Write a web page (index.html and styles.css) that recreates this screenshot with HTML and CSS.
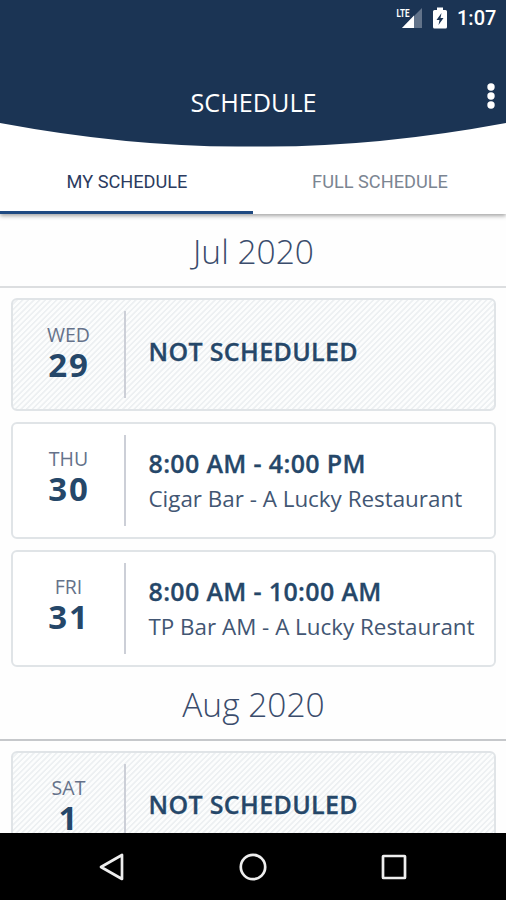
FILE: index.html
```html
<!DOCTYPE html>
<html lang="en">
<head>
<meta charset="utf-8">
<title>Schedule</title>
<link rel="stylesheet" href="styles.css">
</head>
<body>
<div class="app">
  <header class="header">
    <svg class="header-bg" viewBox="0 0 506 147" aria-hidden="true"><path d="M0 0H506V123Q379.500 146.500 268 146.500H238Q126.500 146.500 0 123Z" fill="#1b3454"/></svg>
    <div class="status">
      <svg class="signal" viewBox="0 0 27 22" aria-hidden="true"><path d="M26 1V21H6Z" fill="#62738a"/><path d="M18 8.500V21H6Z" fill="#fff"/><text class="lte" x="0.500" y="9.500" textLength="13" lengthAdjust="spacingAndGlyphs">LTE</text></svg>
      <svg class="battery" viewBox="0 0 14 22" aria-hidden="true"><path d="M4 0.500H10V3H12.500Q14 3 14 4.500V20Q14 21.500 12.500 21.500H1.500Q0 21.500 0 20V4.500Q0 3 1.500 3H4Z" fill="#fff"/><path d="M8.500 6L3.500 13H6.500L5.500 18L10.500 11H7.500Z" fill="#1b3454"/></svg>
      <span class="clock">1:07</span>
    </div>
    <div class="titlebar">
      <h1 class="title">SCHEDULE</h1>
      <svg class="more" viewBox="0 0 8 28" fill="#fff" aria-hidden="true"><circle cx="4" cy="5" r="3.700"/><circle cx="4" cy="14" r="3.700"/><circle cx="4" cy="23" r="3.700"/></svg>
    </div>
  </header>
  <nav class="tabs">
    <div class="tab active"><span>MY SCHEDULE</span></div>
    <div class="tab"><span>FULL SCHEDULE</span></div>
  </nav>
  <main class="list">
    <h2 class="month"><span>Jul 2020</span></h2>
    <article class="card off">
      <div class="date"><span class="dow">WED</span><span class="num">29</span></div>
      <div class="info"><span class="shift none">NOT SCHEDULED</span></div>
    </article>
    <article class="card">
      <div class="date"><span class="dow">THU</span><span class="num">30</span></div>
      <div class="info"><span class="shift">8:00 AM - 4:00 PM</span><span class="place">Cigar Bar - A Lucky Restaurant</span></div>
    </article>
    <article class="card">
      <div class="date"><span class="dow">FRI</span><span class="num">31</span></div>
      <div class="info"><span class="shift">8:00 AM - 10:00 AM</span><span class="place">TP Bar AM - A Lucky Restaurant</span></div>
    </article>
    <h2 class="month later"><span>Aug 2020</span></h2>
    <article class="card off">
      <div class="date"><span class="dow">SAT</span><span class="num">1</span></div>
      <div class="info"><span class="shift none">NOT SCHEDULED</span></div>
    </article>
  </main>
  <footer class="navbar">
    <svg class="nav-icon" viewBox="0 0 30 30" aria-hidden="true"><path d="M25 3V27L4 15Z"/></svg>
    <svg class="nav-icon" viewBox="0 0 30 30" aria-hidden="true"><circle cx="15" cy="15" r="12.200"/></svg>
    <svg class="nav-icon" viewBox="0 0 30 30" aria-hidden="true"><rect x="4" y="4" width="22" height="22" rx="0.500"/></svg>
  </footer>
</div>
</body>
</html>
```
FILE: styles.css
```css
* { box-sizing: border-box; }
body { margin: 0; background: #fff; font-family: "Open Sans", sans-serif; }
.app { width: 506px; height: 900px; display: flex; flex-direction: column; overflow: hidden; background: #fefefe; }
.header { flex: none; height: 147px; position: relative; z-index: 1; background: #fff; }
.header-bg { position: absolute; left: 0; top: 0; width: 506px; height: 147px; }
.status { position: relative; height: 36px; display: flex; justify-content: flex-end; align-items: center; padding-right: 11px; }
.signal { width: 27px; height: 22px; margin-right: 10px; }
.lte { font: bold 10.500px Roboto, sans-serif; fill: #fff; stroke: #1b3454; stroke-width: 1.500px; paint-order: stroke; }
.battery { width: 14px; height: 22px; margin-right: 10px; }
.clock { font: 500 20px/36px Roboto, sans-serif; color: #fff; width: 38px; }
.titlebar { position: relative; height: 111px; display: grid; grid-template-columns: 1fr 125px 1fr; }
.title { grid-column: 2; margin: 48px 0 0; font-size: 25.200px; line-height: 36px; font-weight: 400; color: #fff; white-space: nowrap; }
.more { width: 8px; height: 28px; margin-top: 46px; margin-right: 11px; justify-self: end; }
.tabs { flex: none; height: 67px; display: flex; background: #fff; position: relative; box-shadow: 0 2px 4px rgba(0,0,0,.35); }
.tab { flex: 1; display: flex; justify-content: center; align-items: center; font: 400 18.200px Roboto, sans-serif; color: #7b8592; border-bottom: 3px solid transparent; padding: 5px 0 0 1px; }
.tab.active { color: #2b3b60; border-color: #1f4a82; }
.list { flex: none; height: 619px; overflow: hidden; padding: 0; }
.month { height: 74px; margin: 0 0 10px; border-bottom: 2px solid #dcdee0; display: flex; justify-content: center; font-weight: 300; font-size: 33.500px; line-height: 74px; color: #3a4c6c; white-space: nowrap; padding-left: 1px; }
.month.later { height: 75px; margin-top: -12px; border-color: #c6c8cb; line-height: 76px; }
.card { height: 117px; margin: 0 10px 11px 11px; border: 2px solid #e0e4e7; border-radius: 6px; background: #fff; padding: 11px 0 11px; display: flex; color: #254769; }
.card.off { height: 113px; background: repeating-linear-gradient(135deg, #fcfdfd 0 1.700px, #edf0f2 2.300px 3.400px, #fcfdfd 4px); }
.date { width: 113px; border-right: 2px solid #cccfd7; display: flex; flex-direction: column; align-items: center; }
.dow { font-size: 19.500px; line-height: 26px; color: #65728a; margin-top: 11px; }
.num { font-size: 33px; line-height: 34px; font-weight: 700; letter-spacing: 2px; margin-left: 1px; }
.info { padding-left: 22.500px; display: flex; flex-direction: column; white-space: nowrap; }
.shift { font-size: 25px; line-height: 33px; font-weight: 600; letter-spacing: .35px; -webkit-text-stroke: .3px #254769; margin-top: 12px; }
.shift.none { margin-top: 24px; }
.place { font-size: 22.400px; line-height: 37px; color: #425673; }
.navbar { flex: none; height: 67px; background: #000; display: flex; justify-content: center; gap: 111px; align-items: center; }
.nav-icon { width: 30px; height: 30px; fill: none; stroke: #eee; stroke-width: 2.700px; stroke-linejoin: round; }
```
